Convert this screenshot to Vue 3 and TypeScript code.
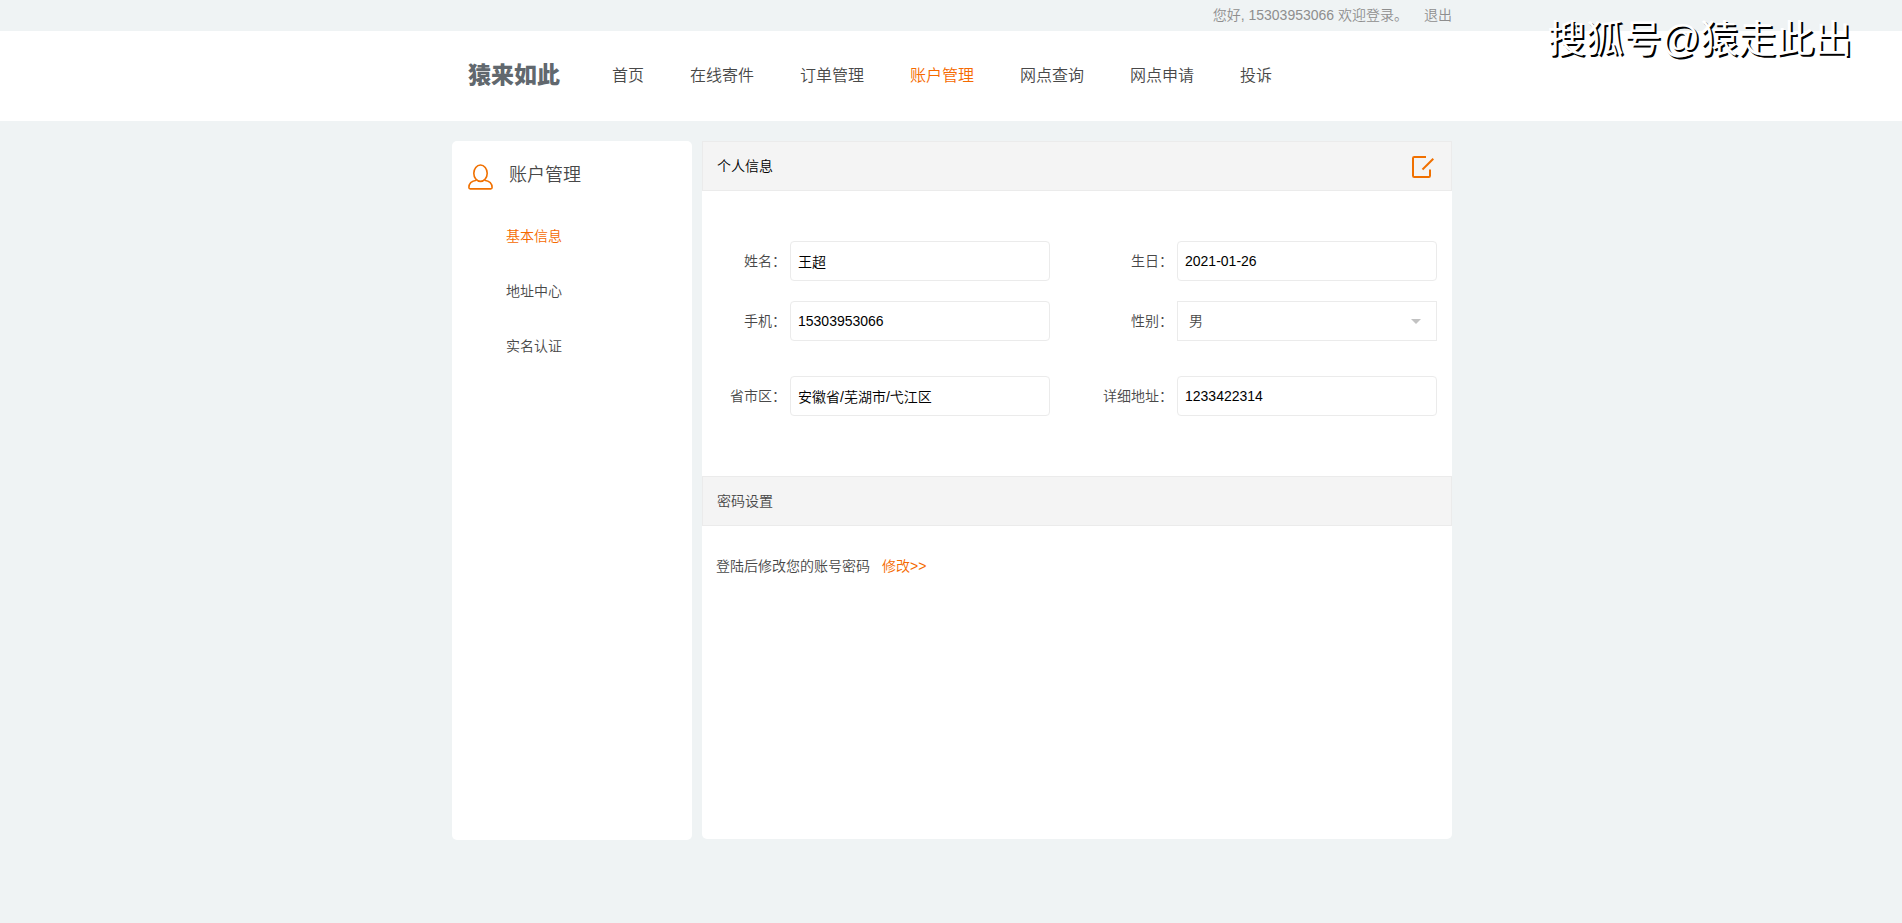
<script setup lang="ts">
import { ref } from 'vue'

interface NavItem {
  label: string
  active?: boolean
}

const navItems: NavItem[] = [
  { label: '首页' },
  { label: '在线寄件' },
  { label: '订单管理' },
  { label: '账户管理', active: true },
  { label: '网点查询' },
  { label: '网点申请' },
  { label: '投诉' },
]

const sideItems: NavItem[] = [
  { label: '基本信息', active: true },
  { label: '地址中心' },
  { label: '实名认证' },
]

const phone = '15303953066'

const form = ref({
  name: '王超',
  birthday: '2021-01-26',
  phone,
  gender: '男',
  region: '安徽省/芜湖市/弋江区',
  address: '1233422314',
})
</script>

<template>
  <div class="page">
    <div class="topbar">
      <div class="container topbar-inner">
        <span>您好, {{ phone }} 欢迎登录。</span>
        <a href="#">退出</a>
      </div>
    </div>

    <header class="header">
      <div class="container header-inner">
        <a class="logo" href="#">猿来如此</a>
        <nav class="nav">
          <a v-for="item in navItems" :key="item.label" href="#" :class="{ active: item.active }">{{ item.label }}</a>
        </nav>
      </div>
    </header>

    <div class="container body">
      <aside class="side">
        <h2 class="side-title">
          <svg width="25" height="26" viewBox="0 0 25 26" fill="none" stroke="#f07000" stroke-width="1.6" stroke-linejoin="round">
            <ellipse cx="12.5" cy="9.2" rx="6.7" ry="8.2" />
            <path d="M8.6 16.2C3.8 16.8 .9 19.6 .9 23.6q0 1.3 1.3 1.3h20.6q1.3 0 1.3-1.3c0-4-2.9-6.8-7.7-7.4" />
          </svg>
          <span>账户管理</span>
        </h2>
        <ul class="side-menu">
          <li v-for="item in sideItems" :key="item.label">
            <a href="#" :class="{ active: item.active }">{{ item.label }}</a>
          </li>
        </ul>
      </aside>

      <main class="main">
        <div class="section-head strong">
          <h3>个人信息</h3>
          <button type="button" class="edit" aria-label="编辑">
            <svg width="22" height="22" viewBox="0 0 22 22" fill="none" stroke="#f07000" stroke-width="2">
              <path d="M14 1H2.200Q1 1 1 2.200V19.800Q1 21 2.200 21H16.800Q18 21 18 19.800V13.500" />
              <path d="M10.500 13.500L21.300 2.700" />
            </svg>
          </button>
        </div>

        <form class="form" @submit.prevent>
          <div class="field">
            <label for="name">姓名：</label>
            <input id="name" v-model="form.name" type="text" />
          </div>
          <div class="field">
            <label for="birthday">生日：</label>
            <input id="birthday" v-model="form.birthday" type="text" />
          </div>
          <div class="field">
            <label for="phone">手机：</label>
            <input id="phone" v-model="form.phone" type="text" />
          </div>
          <div class="field">
            <label for="gender">性别：</label>
            <div class="select">
              <select id="gender" v-model="form.gender">
                <option>男</option>
                <option>女</option>
              </select>
              <svg width="10" height="5" viewBox="0 0 10 5"><path d="M0 0H10L5 5Z" fill="#c2c2c2" /></svg>
            </div>
          </div>
          <div class="field last">
            <label for="region">省市区：</label>
            <input id="region" v-model="form.region" type="text" />
          </div>
          <div class="field last">
            <label for="address">详细地址：</label>
            <input id="address" v-model="form.address" type="text" />
          </div>
        </form>

        <div class="section-head">
          <h3>密码设置</h3>
        </div>
        <p class="password">
          <span>登陆后修改您的账号密码</span>
          <a href="#">修改&gt;&gt;</a>
        </p>
      </main>
    </div>

    <div class="watermark">搜狐号@猿走此出</div>
  </div>
</template>

<style>
body {
  margin: 0;
  background: #eff3f4;
}
</style>

<style scoped>
.page {
  position: relative;
  min-height: 100vh;
  font-family: "Liberation Sans", "Noto Sans CJK SC", sans-serif;
  font-size: 14px;
  font-weight: 350;
  line-height: 20px;
  color: #484848;
}

.page * {
  box-sizing: border-box;
}

a {
  color: inherit;
  text-decoration: none;
}

a.active {
  color: #f56a00;
}

h2,
h3,
p,
ul {
  margin: 0;
  padding: 0;
  font-weight: inherit;
  font-size: inherit;
}

.container {
  max-width: 1002px;
  margin: 0 auto;
  padding-left: 2px;
}

.topbar-inner {
  display: flex;
  justify-content: flex-end;
  gap: 16px;
  height: 31px;
  align-items: center;
  padding-bottom: 2px;
  color: #8e8e8e;
}

.header {
  background: #fff;
}

.header-inner {
  display: flex;
  align-items: center;
  height: 90px;
}

.logo {
  width: 160px;
  padding: 0 0 2px 16px;
  font-size: 23px;
  line-height: 32px;
  font-weight: 900;
  color: #61686e;
}

.nav {
  display: flex;
  gap: 46px;
  font-size: 16px;
  line-height: 24px;
}

.body {
  display: flex;
  align-items: flex-start;
  gap: 10px;
  margin-top: 20px;
}

.side {
  flex: 0 0 240px;
  min-height: 699px;
  background: #fff;
  border-radius: 5px;
}

.side-title {
  display: flex;
  align-items: center;
  gap: 16px;
  height: 68px;
  padding-left: 16px;
  font-size: 18px;
}

.side-title svg {
  margin-top: 3px;
}

.side-menu {
  list-style: none;
}

.side-menu a {
  display: block;
  padding-left: 54px;
  line-height: 55px;
}

.main {
  flex: 1;
  min-width: 0;
  min-height: 698px;
  background: #fff;
  border-radius: 5px;
}

.section-head {
  display: flex;
  align-items: center;
  justify-content: space-between;
  height: 50px;
  padding: 0 17px 0 14px;
  background: #f4f4f4;
  border: 1px solid #ebebeb;
}

.strong {
  color: #000;
}

.edit {
  display: flex;
  padding: 2px 0 0;
  border: 0;
  background: none;
  cursor: pointer;
}

.form {
  display: grid;
  grid-template-columns: 348px 1fr;
  row-gap: 20px;
  padding: 50px 15px 60px 0;
}

.field {
  display: flex;
  align-items: center;
  justify-content: flex-end;
  gap: 4px;
}

.field.last {
  margin-top: 15px;
}

input,
.select {
  width: 260px;
  height: 40px;
}

input,
select {
  padding: 0 7px;
  border: 1px solid #ebebeb;
  border-radius: 4px;
  outline: none;
  background: #fff;
  font: inherit;
  color: #000;
}

.select {
  position: relative;
}

select {
  width: 100%;
  height: 100%;
  padding-left: 11px;
  border-radius: 0;
  appearance: none;
  color: #484848;
}

.select svg {
  position: absolute;
  top: 18px;
  right: 16px;
  pointer-events: none;
}

.password {
  display: flex;
  gap: 12px;
  padding: 30px 14px;
}

.password a {
  color: #f56a00;
}

.watermark {
  position: absolute;
  top: 11px;
  right: 50px;
  font-size: 38px;
  font-weight: 400;
  line-height: 56px;
  color: #fff;
  text-shadow: 2px 2px 0 #000;
  pointer-events: none;
}
</style>
